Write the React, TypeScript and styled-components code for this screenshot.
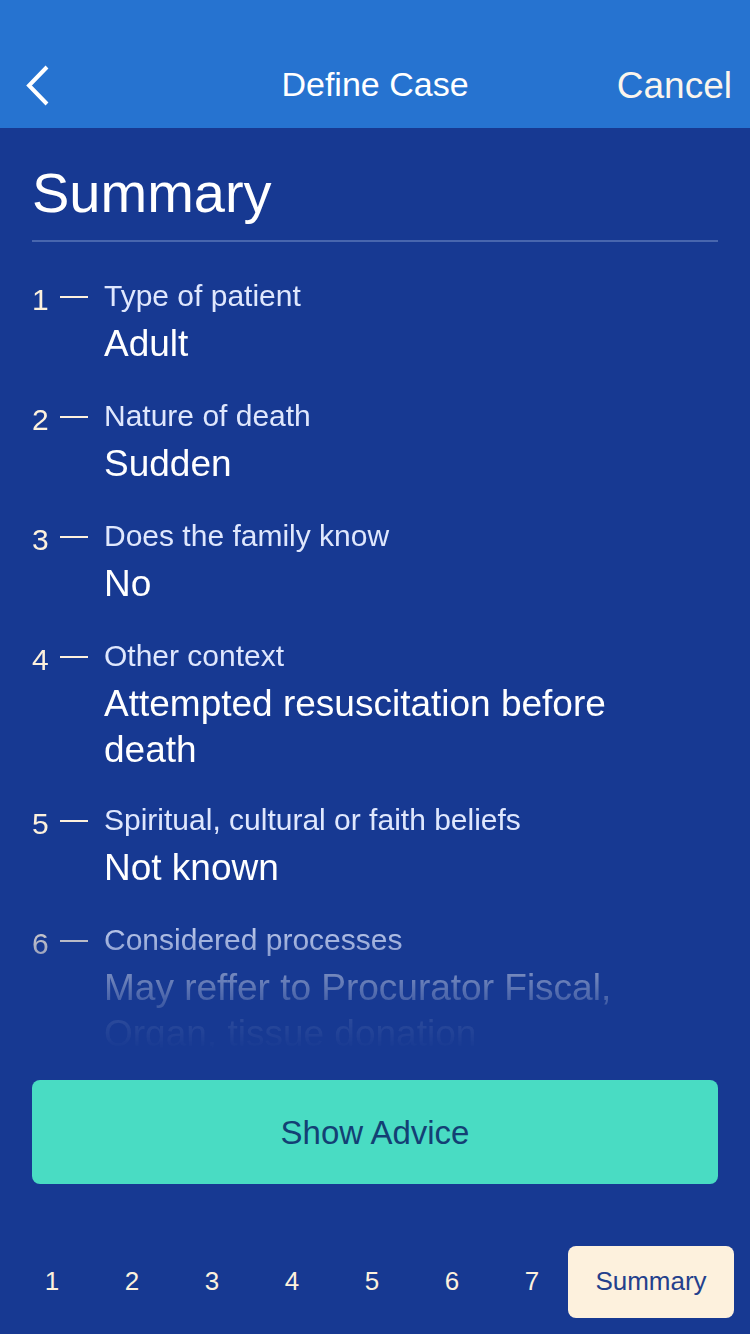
import React from "react";
import styled, { createGlobalStyle } from "styled-components";

const color = {
  bar: "#2673d0",
  page: "#173992",
  rule: "#4866ae",
  cream: "#fdf1dd",
  label: "#dfe7fd",
  accent: "#49dcc3",
  accentText: "#134074",
};

const GlobalStyle = createGlobalStyle`
  *, *::before, *::after { box-sizing: border-box; }
  body {
    margin: 0;
    background: ${color.page};
    color: #fff;
    font-family: "Liberation Sans", Arial, Helvetica, sans-serif;
  }
  button { font-family: inherit; border: 0; cursor: pointer; }
`;

const Screen = styled.div`
  display: flex;
  flex-direction: column;
  height: 100vh;
`;

const Header = styled.header`
  display: grid;
  grid-template-columns: 1fr auto 1fr;
  align-items: center;
  height: 128px;
  flex: none;
  padding: 40px 18px 0;
  background: ${color.bar};
`;

const HeaderTitle = styled.div`
  font-size: 34px;
  line-height: 40px;
`;

const HeaderButton = styled.button<{ $side: "start" | "end" }>`
  display: flex;
  align-items: center;
  justify-self: ${(p) => p.$side};
  min-width: 44px;
  padding: 4px 0 0;
  background: none;
  color: #fbf5ec;
  font-size: 37px;
  line-height: 44px;
`;

const Main = styled.main`
  display: flex;
  flex-direction: column;
  flex: 1;
  min-height: 0;
  padding: 33px 32px 0;
`;

const Title = styled.h1`
  margin: 0;
  padding-bottom: 15px;
  border-bottom: 2px solid ${color.rule};
  font-size: 56px;
  font-weight: 400;
  line-height: 64px;
`;

const Steps = styled.ol`
  flex: 1;
  min-height: 0;
  margin: 0;
  padding: 34px 0 0;
  overflow-y: auto;
  scrollbar-width: none;
  list-style: none;
  mask-image: linear-gradient(
    to bottom,
    #000 calc(100% - 158px),
    rgba(0, 0, 0, 0.82) calc(100% - 128px),
    rgba(0, 0, 0, 0.68) calc(100% - 112px),
    rgba(0, 0, 0, 0.42) calc(100% - 84px),
    rgba(0, 0, 0, 0.21) calc(100% - 56px),
    rgba(0, 0, 0, 0.09) calc(100% - 38px),
    transparent calc(100% - 6px)
  );
`;

const Step = styled.li`
  display: flex;
  min-height: 120px;
  padding-bottom: 27px;

  &:last-child {
    padding-bottom: 0;
  }
`;

const StepNumber = styled.span`
  width: 28px;
  color: ${color.cream};
  font-size: 30px;
  line-height: 48px;
`;

const Dash = styled.span`
  flex: none;
  width: 28px;
  height: 2px;
  margin: 20px 16px 0 0;
  background: ${color.cream};
`;

const StepText = styled.div`
  flex: 1;
  max-width: 560px;
`;

const StepLabel = styled.div`
  margin-bottom: 5px;
  color: ${color.label};
  font-size: 30px;
  line-height: 40px;
`;

const StepValue = styled.div`
  font-size: 37px;
  line-height: 46px;
`;

const PrimaryButton = styled.button`
  flex: none;
  height: 104px;
  margin-top: 24px;
  padding: 2px 0 0;
  border-radius: 8px;
  background: ${color.accent};
  color: ${color.accentText};
  font-size: 33px;
`;

const Pager = styled.nav`
  display: flex;
  flex: none;
  padding: 62px 16px 16px;
`;

const PageNumbers = styled.div`
  display: flex;
  flex: 1;
  justify-content: space-between;
`;

const PageButton = styled.button<{ $active?: boolean }>`
  width: ${(p) => (p.$active ? "166px" : "72px")};
  height: 72px;
  padding: 0 0 2px;
  border-radius: 8px;
  background: ${(p) => (p.$active ? color.cream : "transparent")};
  color: ${(p) => (p.$active ? "#24408c" : color.cream)};
  font-size: 26px;
`;

const steps = [
  { label: "Type of patient", value: "Adult" },
  { label: "Nature of death", value: "Sudden" },
  { label: "Does the family know", value: "No" },
  { label: "Other context", value: "Attempted resuscitation before death" },
  { label: "Spiritual, cultural or faith beliefs", value: "Not known" },
  {
    label: "Considered processes",
    value: "May reffer to Procurator Fiscal, Organ, tissue donation",
  },
];

const pages = [1, 2, 3, 4, 5, 6, 7];

export default function App() {
  return (
    <>
      <GlobalStyle />
      <Screen>
        <Header>
          <HeaderButton $side="start" type="button" aria-label="Back">
            <svg width="44" height="44" viewBox="0 0 44 44" fill="none">
              <path d="M29 3 L11 21.5 L29 40" stroke="#fff" strokeWidth="4" />
            </svg>
          </HeaderButton>
          <HeaderTitle>Define Case</HeaderTitle>
          <HeaderButton $side="end" type="button">
            Cancel
          </HeaderButton>
        </Header>
        <Main>
          <Title>Summary</Title>
          <Steps>
            {steps.map((step, i) => (
              <Step key={step.label}>
                <StepNumber>{i + 1}</StepNumber>
                <Dash />
                <StepText>
                  <StepLabel>{step.label}</StepLabel>
                  <StepValue>{step.value}</StepValue>
                </StepText>
              </Step>
            ))}
          </Steps>
          <PrimaryButton type="button">Show Advice</PrimaryButton>
        </Main>
        <Pager aria-label="Steps">
          <PageNumbers>
            {pages.map((n) => (
              <PageButton key={n} type="button">
                {n}
              </PageButton>
            ))}
          </PageNumbers>
          <PageButton $active type="button" aria-current="step">
            Summary
          </PageButton>
        </Pager>
      </Screen>
    </>
  );
}
